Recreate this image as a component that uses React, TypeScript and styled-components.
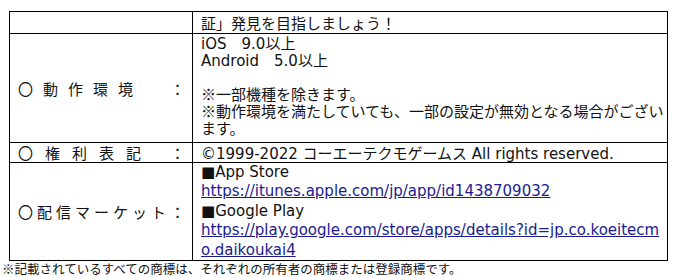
import styled, { createGlobalStyle } from 'styled-components';

const GlobalStyle = createGlobalStyle`
	body {
		margin: 0;
		background: #fff;
		color: #111;
		font-family: 'DejaVu Sans', 'Noto Sans CJK JP', sans-serif;
	}
`;

const Page = styled.div`
	padding: 11px 0 0 2px;
`;

const Table = styled.table`
	margin-left: 7px;
	width: 659px;
	border-collapse: collapse;
	table-layout: fixed;
	font-size: 15px;

	td {
		border: 1px solid #000;
		padding: 0;
	}
`;

const LabelCell = styled.td`
	width: 182px;
	vertical-align: middle;
`;

const ValueCell = styled.td<{ $pb?: number }>`
	vertical-align: top;
	padding: 0 0 ${(p) => p.$pb ?? 0}px 8px !important;
`;

const Line = styled.div<{ $h: number }>`
	height: ${(p) => p.$h}px;
	line-height: ${(p) => p.$h}px;
	white-space: nowrap;
`;

const Label = styled.div`
	display: flex;
	align-items: center;
	padding: 0 7px 0 8px;
	font-family: 'Noto Sans CJK JP', sans-serif;
	line-height: 19px;
	white-space: nowrap;
`;

const Chars = styled.span<{ $spacing: number }>`
	letter-spacing: ${(p) => p.$spacing}px;
`;

const Colon = styled.span`
	margin-left: auto;
`;

const Ja = styled.span`
	font-family: 'Noto Sans CJK JP', sans-serif;
`;

const StoreLink = styled.a`
	display: block;
	color: #1b1b8f;
	text-decoration: underline;
`;

const Note = styled.p`
	margin: 1px 0 0;
	font-family: 'Noto Sans CJK JP', sans-serif;
	font-size: 12.5px;
	line-height: 14px;
`;

function App() {
	return (
		<Page>
			<GlobalStyle />
			<Table>
				<tbody>
					<tr>
						<LabelCell />
						<ValueCell>
							<Line $h={21}>
								<Ja>証」発見を目指しましょう！</Ja>
							</Line>
						</ValueCell>
					</tr>
					<tr>
						<LabelCell>
							<Label>
								<Chars $spacing={10}>〇動作環境</Chars>
								<Colon>：</Colon>
							</Label>
						</LabelCell>
						<ValueCell $pb={6}>
							<Line $h={17}>
								iOS<Ja>　</Ja>9.0<Ja>以上</Ja>
							</Line>
							<Line $h={17}>
								Android<Ja>　</Ja>5.0<Ja>以上</Ja>
							</Line>
							<Line $h={17} />
							<Line $h={17}>
								<Ja>※一部機種を除きます。</Ja>
							</Line>
							<Line $h={17}>
								<Ja>※動作環境を満たしていても、一部の設定が無効となる場合がござい</Ja>
							</Line>
							<Line $h={17}>
								<Ja>ます。</Ja>
							</Line>
						</ValueCell>
					</tr>
					<tr>
						<LabelCell>
							<Label>
								<Chars $spacing={12}>〇権利表記</Chars>
								<Colon>：</Colon>
							</Label>
						</LabelCell>
						<ValueCell>
							<Line $h={19}>
								©1999-2022 <Ja>コーエーテクモゲームス</Ja> All rights reserved.
							</Line>
						</ValueCell>
					</tr>
					<tr>
						<LabelCell>
							<Label>
								<Chars $spacing={4}>〇配信マーケット</Chars>
								<Colon>：</Colon>
							</Label>
						</LabelCell>
						<ValueCell>
							<Line $h={19.4}>■App Store</Line>
							<StoreLink href="#">
								<Line $h={19.4}>https://itunes.apple.com/jp/app/id1438709032</Line>
							</StoreLink>
							<Line $h={19.4}>■Google Play</Line>
							<StoreLink href="#">
								<Line $h={19.4}>https://play.google.com/store/apps/details?id=jp.co.koeitecm</Line>
								<Line $h={19.4}>o.daikoukai4</Line>
							</StoreLink>
						</ValueCell>
					</tr>
				</tbody>
			</Table>
			<Note>※記載されているすべての商標は、それぞれの所有者の商標または登録商標です。</Note>
		</Page>
	);
}

export default App;
